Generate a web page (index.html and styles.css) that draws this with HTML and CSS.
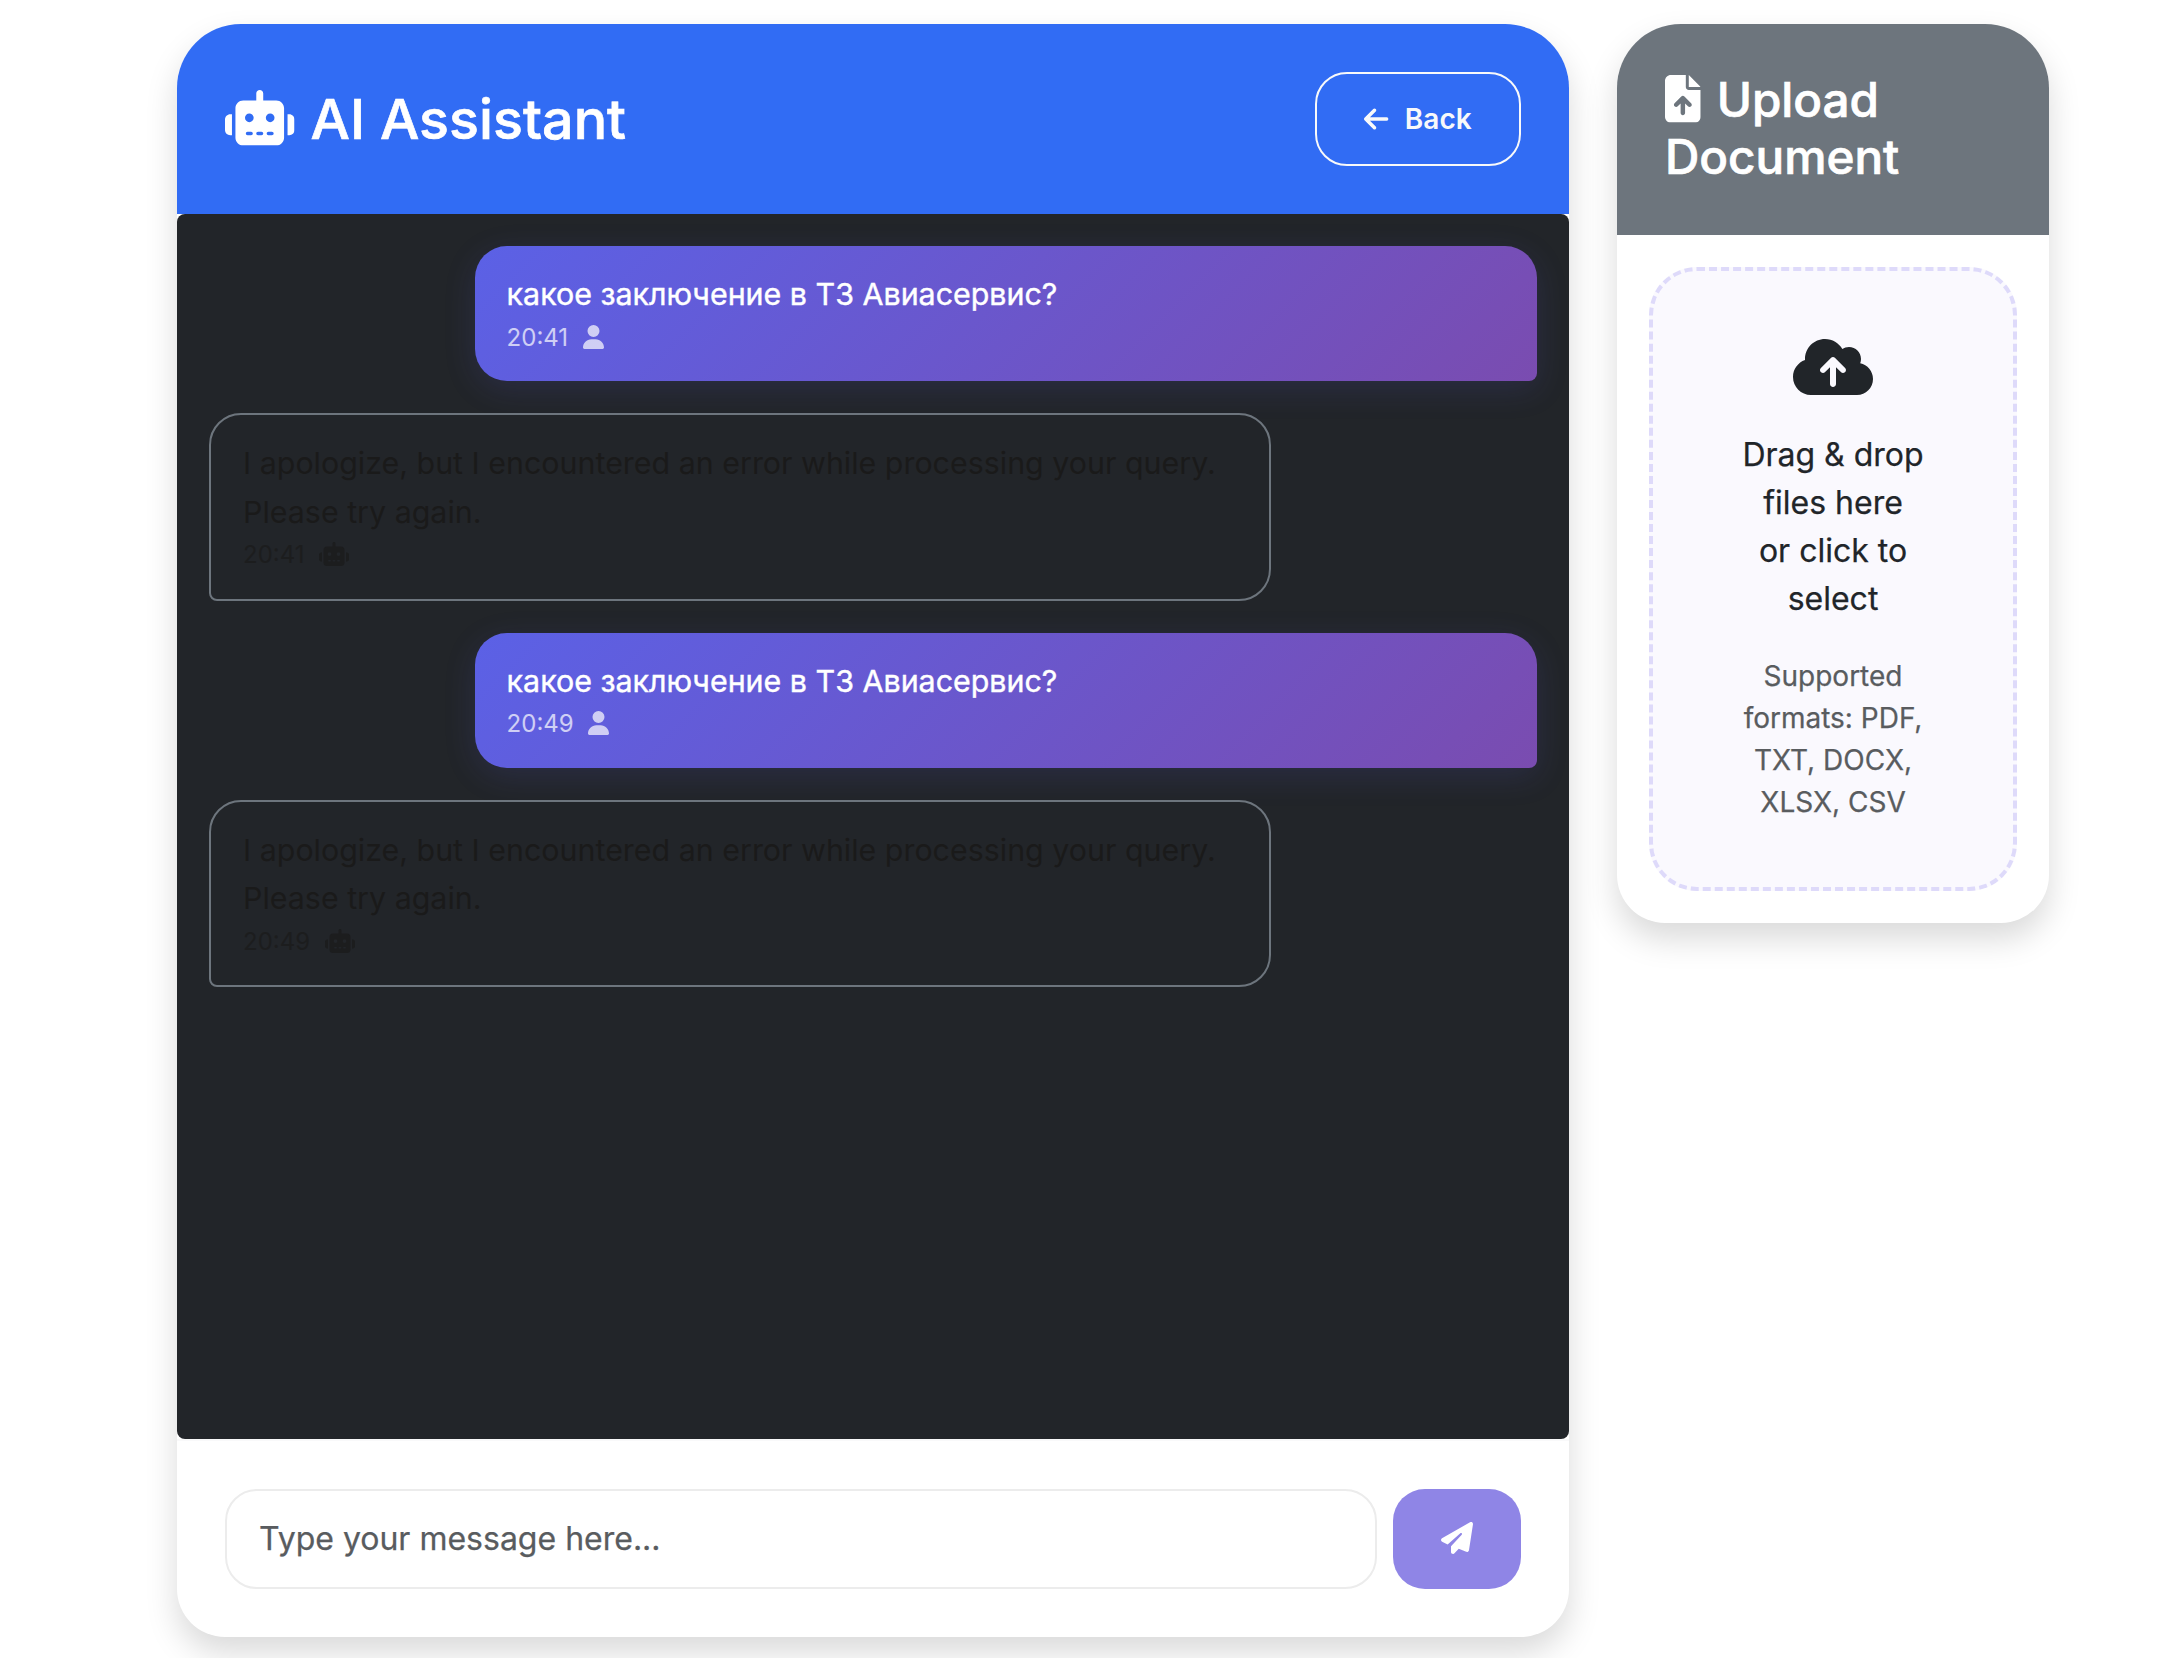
FILE: index.html
```html
<!DOCTYPE html>
<html lang="en">
<head>
<meta charset="utf-8">
<title>AI Assistant</title>
<link rel="stylesheet" href="styles.css">
</head>
<body>
<svg class="sprite" aria-hidden="true">
  <symbol id="robot" viewBox="0 0 640 512"><path d="M320 0c17.700 0 32 14.300 32 32l0 64 120 0c39.800 0 72 32.200 72 72l0 272c0 39.800-32.200 72-72 72l-304 0c-39.800 0-72-32.200-72-72l0-272c0-39.800 32.200-72 72-72l120 0 0-64c0-17.700 14.300-32 32-32zM208 384c-8.800 0-16 7.200-16 16s7.200 16 16 16l32 0c8.800 0 16-7.200 16-16s-7.200-16-16-16l-32 0zm96 0c-8.800 0-16 7.200-16 16s7.200 16 16 16l32 0c8.800 0 16-7.200 16-16s-7.200-16-16-16l-32 0zm96 0c-8.800 0-16 7.200-16 16s7.200 16 16 16l32 0c8.800 0 16-7.200 16-16s-7.200-16-16-16l-32 0zM264 256a40 40 0 1 0 -80 0 40 40 0 1 0 80 0zm152 40a40 40 0 1 0 0-80 40 40 0 1 0 0 80zM48 224l16 0 0 192-16 0c-26.500 0-48-21.500-48-48l0-96c0-26.500 21.500-48 48-48zm544 0c26.500 0 48 21.500 48 48l0 96c0 26.500-21.500 48-48 48l-16 0 0-192 16 0z"/></symbol>
  <symbol id="arrow-left" viewBox="0 0 448 512"><path d="M9.400 233.400c-12.500 12.500-12.500 32.800 0 45.300l160 160c12.500 12.500 32.800 12.500 45.300 0s12.500-32.800 0-45.300L109.200 288 416 288c17.700 0 32-14.300 32-32s-14.300-32-32-32l-306.700 0L214.600 118.600c12.500-12.500 12.500-32.800 0-45.300s-32.800-12.500-45.300 0l-160 160z"/></symbol>
  <symbol id="user" viewBox="0 0 448 512"><path d="M224 256A128 128 0 1 0 224 0a128 128 0 1 0 0 256zm-45.700 48C79.800 304 0 383.800 0 482.300C0 498.700 13.300 512 29.700 512l388.600 0c16.400 0 29.700-13.300 29.700-29.700C448 383.800 368.200 304 269.700 304l-91.400 0z"/></symbol>
  <symbol id="file-up" viewBox="0 0 384 512"><path d="M64 0C28.700 0 0 28.700 0 64L0 448c0 35.300 28.700 64 64 64l256 0c35.300 0 64-28.700 64-64l0-288-128 0c-17.700 0-32-14.300-32-32L224 0 64 0zM256 0l0 128 128 0L256 0zM216 408c0 13.300-10.700 24-24 24s-24-10.700-24-24l0-102.100-31 31c-9.400 9.400-24.600 9.400-33.900 0s-9.400-24.600 0-33.900l72-72c9.400-9.400 24.600-9.400 33.900 0l72 72c9.400 9.400 9.400 24.600 0 33.900s-24.600 9.400-33.900 0l-31-31L216 408z"/></symbol>
  <symbol id="cloud-up" viewBox="0 0 640 512"><path d="M144 480C64.500 480 0 415.500 0 336c0-62.800 40.200-116.200 96.200-135.900c-.1-2.700-.2-5.400-.2-8.100c0-88.400 71.600-160 160-160c59.300 0 111 32.200 138.700 80.200C409.900 102 428.300 96 448 96c53 0 96 43 96 96c0 12.200-2.300 23.800-6.400 34.600C596 238.400 640 290.100 640 352c0 70.700-57.300 128-128 128l-368 0zm79-217c-9.400 9.400-9.400 24.600 0 33.900s24.600 9.400 33.900 0l39-39L296 392c0 13.300 10.700 24 24 24s24-10.700 24-24l0-134.100 39 39c9.400 9.400 24.600 9.400 33.900 0s9.400-24.600 0-33.900l-80-80c-9.400-9.400-24.600-9.400-33.900 0l-80 80z"/></symbol>
  <symbol id="plane" viewBox="0 0 512 512"><path d="M498.100 5.600c10.100 7 15.400 19.100 13.500 31.200l-64 416c-1.500 9.700-7.400 18.200-16 23s-18.900 5.400-28 1.600L284 427.700l-68.500 74.100c-8.900 9.700-22.900 12.900-35.200 8.100S160 493.200 160 480l0-83.600c0-4 1.500-7.800 4.200-10.800L331.800 202.800c5.800-6.300 5.600-16-.4-22s-15.700-6.400-22-.7L106 360.800 17.700 316.600C7.100 311.300 .3 300.700 0 288.900s5.900-22.800 16.100-28.700l448-256c10.700-6.100 23.900-5.500 34 1.400z"/></symbol>
</svg>

<main class="layout">
  <section class="card">
    <header class="card-header card-header-primary">
      <h3 class="title"><svg class="icon icon-640"><use href="#robot"/></svg>AI Assistant</h3>
      <button class="btn-back"><svg class="icon icon-448"><use href="#arrow-left"/></svg>Back</button>
    </header>
    <div class="messages">
      <div class="message message-user">
        <div>какое заключение в ТЗ Авиасервис?</div>
        <div class="time">20:41 <svg class="icon icon-448"><use href="#user"/></svg></div>
      </div>
      <div class="message message-bot">
        <div>I apologize, but I encountered an error while processing your query. Please try again.</div>
        <div class="time">20:41 <svg class="icon icon-640"><use href="#robot"/></svg></div>
      </div>
      <div class="message message-user">
        <div>какое заключение в ТЗ Авиасервис?</div>
        <div class="time">20:49 <svg class="icon icon-448"><use href="#user"/></svg></div>
      </div>
      <div class="message message-bot">
        <div>I apologize, but I encountered an error while processing your query. Please try again.</div>
        <div class="time">20:49 <svg class="icon icon-640"><use href="#robot"/></svg></div>
      </div>
    </div>
    <footer class="composer">
      <input class="composer-input" type="text" placeholder="Type your message here...">
      <button class="btn-send" aria-label="Send"><svg class="icon icon-512"><use href="#plane"/></svg></button>
    </footer>
  </section>

  <aside class="card">
    <header class="card-header card-header-secondary">
      <h4 class="subtitle"><svg class="icon icon-384"><use href="#file-up"/></svg>Upload Document</h4>
    </header>
    <div class="upload-body">
      <div class="dropzone">
        <svg class="icon icon-640 cloud"><use href="#cloud-up"/></svg>
        <p class="drop-text">Drag &amp; drop files here<br>or click to select</p>
        <p class="drop-hint">Supported formats: PDF, TXT, DOCX, XLSX, CSV</p>
      </div>
    </div>
  </aside>
</main>
</body>
</html>
```
FILE: styles.css
```css
* { box-sizing: border-box; }

body {
  margin: 0;
  height: 1658px;
  overflow: hidden;
  background: #fff;
  color: #212529;
  font-family: Inter, "Liberation Sans", sans-serif;
  font-size: 32px;
  line-height: 1.5;
  -webkit-text-stroke: 0.25px currentColor;
}

h3, h4, p { margin: 0; }

button, input { font-family: inherit; }

.sprite { display: none; }

.icon {
  display: inline-block;
  height: 1em;
  vertical-align: -0.125em;
  fill: currentColor;
}
.icon-384 { width: 0.75em; }
.icon-448 { width: 0.875em; }
.icon-512 { width: 1em; }
.icon-640 { width: 1.25em; }

.layout {
  display: grid;
  grid-template-columns: 1392px 432px;
  gap: 48px;
  align-items: start;
  padding: 24px 0 0 177px;
}

.card {
  background: #fff;
  border-radius: 64px 64px 48px 48px;
  box-shadow: 0 16px 32px rgba(0, 0, 0, 0.15);
}

.card-header {
  padding: 48px;
  border-radius: 64px 64px 0 0;
  color: #fff;
}
.card-header-primary {
  display: flex;
  align-items: center;
  justify-content: space-between;
  background: #316cf4;
}
.card-header-secondary {
  padding-top: 47px;
  padding-bottom: 50px;
  background: #6d757d;
}

.title, .subtitle {
  font-weight: 500;
  -webkit-text-stroke: 0.7px currentColor;
}
.title {
  font-size: 55.6px;
  line-height: 1.2;
}
.subtitle {
  font-size: 47.6px;
  line-height: 57px;
}
.title .icon, .subtitle .icon, .btn-back .icon { margin-right: 16px; }

.btn-back {
  width: 206px;
  height: 94px;
  padding: 0;
  border: 2px solid #f8f9fa;
  border-radius: 32px;
  background: transparent;
  color: #f8f9fa;
  font-size: 28px;
  font-weight: 600;
  -webkit-text-stroke-width: 0;
}

.messages {
  display: flex;
  flex-direction: column;
  gap: 32px;
  height: 1225px;
  padding: 32px;
  border-radius: 8px;
  background: #222529;
}

.message {
  width: 80%;
  padding: 24px 32px;
  font-size: 30.4px;
  line-height: 1.6;
}
.message-user {
  align-self: flex-end;
  border-radius: 32px 32px 8px 32px;
  background: linear-gradient(135deg, #5b61e6 0%, #7a4cb0 100%);
  box-shadow: 0 8px 32px rgba(91, 97, 230, 0.15);
  color: #fff;
  -webkit-text-stroke-width: 0.4px;
}
.message-bot {
  border: 2px solid #6d757d;
  border-radius: 32px 32px 32px 8px;
  background: #222529;
  color: #1a1a1a;
  -webkit-text-stroke-width: 0;
}

.time {
  font-size: 24px;
  opacity: 0.7;
  -webkit-text-stroke-width: 0;
}
.time .icon { margin-left: 8px; }

.composer {
  display: flex;
  gap: 16px;
  padding: 48px;
  border-top: 2px solid #f9f9fa;
}
.composer-input {
  flex: 1;
  height: 100px;
  padding: 0 32px 2px;
  border: 2px solid #ececec;
  border-radius: 32px;
  background: #fff;
  font-size: 32px;
}
.composer-input::placeholder { color: #595c5f; }
.btn-send {
  width: 128px;
  height: 100px;
  padding: 0 0 2px;
  border: 0;
  border-radius: 32px;
  background: #8f85e6;
  color: #fff;
  font-size: 32px;
}

.upload-body { padding: 32px; }
.dropzone {
  padding: 64px;
  border: 4px dashed #dedafa;
  border-radius: 48px;
  background: #faf9fe;
  text-align: center;
}
.cloud {
  display: block;
  margin: 0 auto 32px;
  font-size: 64px;
}
.drop-text { margin-bottom: 32px; }
.drop-hint {
  color: #595c5f;
  font-size: 28px;
}
```
